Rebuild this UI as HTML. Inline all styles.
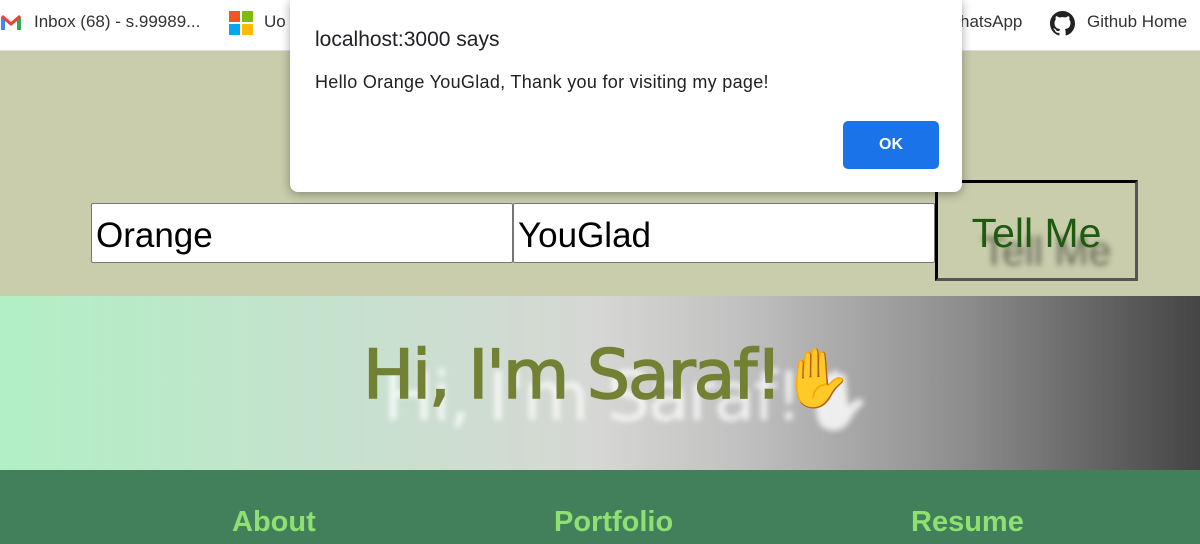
<!DOCTYPE html>
<html><head><style>
body{margin:0;width:1200px;height:544px;overflow:hidden;position:relative;font-family:"Liberation Sans",sans-serif;}
.bar{position:absolute;top:0;left:0;width:1200px;height:50px;background:#fff;border-bottom:1px solid #e0e0e0;font-size:17px;color:#333;}
.bar span{position:absolute;top:12px;}
.top{position:absolute;top:51px;left:0;width:1200px;height:245px;background:#c9cdac;}
.in{position:absolute;top:203px;background:#fff;border:1px solid #767676;border-radius:2px;font-size:35px;line-height:64px;padding-left:4px;box-sizing:border-box;height:60px;color:#000}
.btn{position:absolute;left:935px;top:180px;width:203px;height:101px;box-sizing:border-box;border:3px solid;border-color:#000 #555 #555 #000;color:#1e5a10;font-size:41px;text-align:center;line-height:100px;text-shadow:10px 18px 6px rgba(0,0,0,.5)}
.ban{position:absolute;top:296px;left:0;width:1200px;height:174px;background:linear-gradient(90deg,#b1efc5 0%,#d6d7d4 50%,#c0c0c0 62%,#8e8e8e 80%,#454545 100%);}
.ban h1{margin:0;position:absolute;left:363px;top:40px;font-size:68px;font-weight:normal;color:#738134;font-family:"DejaVu Sans",sans-serif;letter-spacing:-2px;-webkit-text-stroke:1.6px #738134;text-shadow:20px 22px 6px rgba(255,255,255,.8)}
.foot{position:absolute;top:470px;left:0;width:1200px;height:74px;background:#42805c;color:#8ee070;font-weight:bold;font-size:29px;}
.foot span{position:absolute;top:36px}
.dlg{position:absolute;left:290px;top:0;width:672px;height:192px;background:#fff;border-radius:0 0 8px 8px;box-shadow:0 2px 10px rgba(0,0,0,.35);color:#202124}
</style></head><body>
<div class="bar">
<svg style="position:absolute;left:0;top:14px" width="22" height="17" viewBox="0 0 22 17"><path d="M1 3v13h4V7l6 5 6-5v9h4V3l-2-2-8 7-8-7z" fill="#ea4335"/><path d="M1 3v13h4V7z" fill="#4285f4"/><path d="M17 7v9h4V3z" fill="#34a853"/></svg>
<span style="left:34px">Inbox (68) - s.99989...</span>
<div style="position:absolute;left:229px;top:11px;width:11px;height:11px;background:#f35325"></div>
<div style="position:absolute;left:242px;top:11px;width:11px;height:11px;background:#81bc06"></div>
<div style="position:absolute;left:229px;top:24px;width:11px;height:11px;background:#05a6f0"></div>
<div style="position:absolute;left:242px;top:24px;width:11px;height:11px;background:#ffba08"></div>
<span style="left:264px">Uo</span>
<span style="left:960px">hatsApp</span>
<svg style="position:absolute;left:1050px;top:11px" width="25" height="25" viewBox="0 0 16 16"><path fill="#222" d="M8 0C3.58 0 0 3.58 0 8c0 3.54 2.290 6.53 5.47 7.59.4.07.55-.17.55-.38v-1.33c-2.230.48-2.7-1.07-2.7-1.07-.36-.93-.89-1.170-.89-1.17-.73-.5.05-.49.05-.49.8.06 1.23.83 1.23.83.72 1.22 1.87.87 2.33.66.07-.52.28-.87.5-1.07-1.78-.2-3.64-.89-3.640-3.95 0-.87.31-1.59.82-2.15-.08-.2-.36-1.02.08-2.12 0 0 .67-.21 2.2.82a7.6 7.6 0 014 0c1.53-1.04 2.2-.82 2.2-.82.44 1.1.16 1.92.08 2.12.51.56.82 1.27.82 2.15 0 3.07-1.87 3.75-3.65 3.95.29.25.54.73.54 1.48v2.2c0 .21.15.46.55.38A8 8 0 0016 8c0-4.42-3.58-8-8-8z"/></svg>
<span style="left:1087px">Github Home</span>
</div>
<div class="top"></div>
<div class="in" style="left:91px;width:422px">Orange</div>
<div class="in" style="left:513px;width:422px">YouGlad</div>
<div class="btn">Tell Me</div>
<div class="ban"><h1>Hi, I'm Saraf!<span style="font-size:58px;-webkit-text-stroke:0">✋</span></h1></div>
<div class="foot"><span style="left:232px">About</span><span style="left:554px">Portfolio</span><span style="left:911px">Resume</span></div>
<div class="dlg">
<div style="position:absolute;left:25px;top:28px;font-size:21px">localhost:3000 says</div>
<div style="position:absolute;left:25px;top:72px;font-size:18px;letter-spacing:.3px">Hello Orange YouGlad, Thank you for visiting my page!</div>
<div style="position:absolute;left:553px;top:121px;width:96px;height:48px;background:#1a73e8;border-radius:5px;color:#fff;font-weight:bold;font-size:16px;text-align:center;line-height:48px">OK</div>
</div>
</body></html>
